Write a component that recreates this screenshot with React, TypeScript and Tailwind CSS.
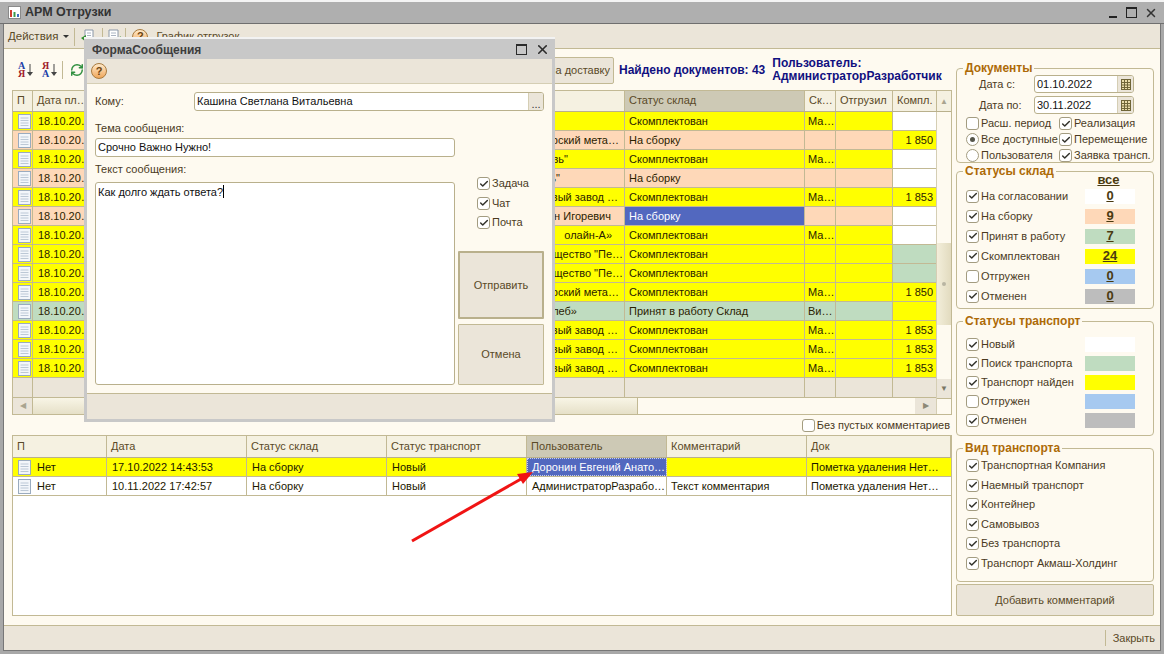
import { Check, RefreshCw, X } from "lucide-react";

const FONT = "[font-family:'Liberation_Sans',Arial,sans-serif]";

type Row = {
  bg: string;
  client: string;
  pad: string;
  status: string;
  sklad?: string;
  kompl?: string;
  komplBg?: string;
  selected?: boolean;
};

const YELLOW = "bg-[#ffff00]";
const PEACH = "bg-[#fed8b8]";
const GREEN = "bg-[#bfdcc0]";
const WHITE = "bg-white";

// клиент выровнен вправо: левая часть всё равно под диалогом
const rows: Row[] = [
  { bg: YELLOW, client: "", pad: "pr-2", status: "Скомплектован", sklad: "Ма…" },
  { bg: PEACH, client: "Северский мета…", pad: "pr-[5px]", status: "На сборку", kompl: "1 850", komplBg: YELLOW },
  { bg: YELLOW, client: "ООО \"Новь\"", pad: "pr-[56px]", status: "Скомплектован", sklad: "Ма…" },
  { bg: PEACH, client: "ООО \"Новь\"", pad: "pr-[64px]", status: "На сборку" },
  { bg: YELLOW, client: "Первый завод …", pad: "pr-[6px]", status: "Скомплектован", sklad: "Ма…", kompl: "1 853", komplBg: YELLOW },
  { bg: PEACH, client: "Иванов Иван Игоревич", pad: "pr-[13px]", status: "На сборку", selected: true },
  { bg: YELLOW, client: "олайн-А»", pad: "pr-[12px]", status: "Скомплектован", sklad: "Ма…" },
  { bg: YELLOW, client: "Общество \"Пе…", pad: "pr-[1px]", status: "Скомплектован", komplBg: GREEN },
  { bg: YELLOW, client: "Общество \"Пе…", pad: "pr-[1px]", status: "Скомплектован", komplBg: GREEN },
  { bg: YELLOW, client: "Северский мета…", pad: "pr-[5px]", status: "Скомплектован", sklad: "Ма…", kompl: "1 850", komplBg: YELLOW },
  { bg: GREEN, client: "«Хлеб»", pad: "pr-[47px]", status: "Принят в работу Склад", sklad: "Ви…", komplBg: YELLOW },
  { bg: YELLOW, client: "Первый завод …", pad: "pr-[6px]", status: "Скомплектован", sklad: "Ма…", kompl: "1 853", komplBg: YELLOW },
  { bg: YELLOW, client: "Первый завод …", pad: "pr-[6px]", status: "Скомплектован", sklad: "Ма…", kompl: "1 853", komplBg: YELLOW },
  { bg: YELLOW, client: "Первый завод …", pad: "pr-[6px]", status: "Скомплектован", sklad: "Ма…", kompl: "1 853", komplBg: YELLOW },
];

function DocIcon() {
  return (
    <svg width="13" height="15" viewBox="0 0 13 15" className="shrink-0">
      <rect x="0.5" y="0.5" width="12" height="14" fill="#f3f6fa" stroke="#9aabbf" />
      <path d="M2.5 4h8M2.5 6.5h8M2.5 9h8M2.5 11.5h8" stroke="#bcc8d6" strokeWidth="1" />
    </svg>
  );
}

function HelpIcon() {
  return (
    <span className="w-[16px] h-[16px] shrink-0 rounded-full border border-[#a87b3f] bg-gradient-to-b from-[#ffe9c8] to-[#eea659] text-[11px] font-bold text-[#6a4310] flex items-center justify-center">
      ?
    </span>
  );
}

function CheckBox({ checked = true }: { checked?: boolean }) {
  return (
    <span className="w-[13px] h-[13px] shrink-0 rounded-[3px] border border-[#a39c80] bg-white flex items-center justify-center">
      {checked && <Check size={10} strokeWidth={3.5} className="text-[#33332c]" />}
    </span>
  );
}

function Radio({ checked = false }: { checked?: boolean }) {
  return (
    <span className="w-[13px] h-[13px] shrink-0 rounded-full border border-[#a39c80] bg-white flex items-center justify-center">
      {checked && <span className="w-[5px] h-[5px] rounded-full bg-[#55554a]" />}
    </span>
  );
}

function CheckLabel({ label, checked = true, className = "" }: { label: string; checked?: boolean; className?: string }) {
  return (
    <div className={`flex items-center gap-[2px] leading-[13px] text-[#4b3a1e] ${className}`}>
      <CheckBox checked={checked} />
      <span className="whitespace-nowrap">{label}</span>
    </div>
  );
}

function RadioLabel({ label, checked = false }: { label: string; checked?: boolean }) {
  return (
    <div className="flex items-center gap-[2px] leading-[13px] text-[#4b3a1e]">
      <Radio checked={checked} />
      <span className="whitespace-nowrap">{label}</span>
    </div>
  );
}

function Group({ title, className, children }: { title: string; className: string; children: React.ReactNode }) {
  return (
    <div className={`relative shrink-0 rounded-[4px] border border-[#c2b994] ${className}`}>
      <span className="absolute left-[6px] -top-[8px] bg-[#fefaf0] px-[2px] text-[12px] leading-[14px] font-bold text-[#ad6a07] whitespace-nowrap">
        {title}
      </span>
      {children}
    </div>
  );
}

function DateField({ label, value }: { label: string; value: string }) {
  return (
    <div className="flex items-center h-[18px]">
      <span className="w-[68px] pl-[13px] text-[#4b3a1e]">{label}</span>
      <div className="w-[100px] h-[18px] rounded-[3px] border border-[#b9b08c] bg-white flex items-center overflow-hidden">
        <span className="flex-1 pl-[2px] text-[#111]">{value}</span>
        <span className="w-[16px] h-full bg-[#ebe5d9] border-l border-[#d5ceb4] flex items-center justify-center">
          <svg width="10" height="11" viewBox="0 0 10 11">
            <rect x="0.5" y="0.5" width="9" height="10" fill="#e9dcaa" stroke="#6f6537" />
            <path d="M0 3.5h10M0 6h10M0 8.5h10M3.5 0v11M6.5 0v11" stroke="#6f6537" strokeWidth="1" />
          </svg>
        </span>
      </div>
    </div>
  );
}

function StatusRow({ label, checked = true, value, swatch, h }: { label: string; checked?: boolean; value?: string; swatch: string; h: string }) {
  return (
    <div className={`flex items-center ${h}`}>
      <CheckLabel label={label} checked={checked} className="w-[119px]" />
      <div className={`w-[50px] h-[15px] flex items-center justify-center font-bold underline text-[13px] text-[#4a3a10] ${swatch}`}>
        {value}
      </div>
    </div>
  );
}

function MainTable() {
  return (
    <div className="h-[325px] shrink-0 border border-[#c2b994] bg-[#ebe5d9] flex flex-col overflow-hidden">
      <div className="flex h-[21px] bg-[#f5f1e1] border-b border-[#b9b08c] text-[#5a4a28] shrink-0 leading-[19px]">
        <div className="w-[20px] shrink-0 border-r border-[#c2b994] pl-[4px]">П</div>
        <div className="w-[97px] shrink-0 border-r border-[#c2b994] pl-[4px] whitespace-nowrap">Дата пл…</div>
        <div className="w-[495px] shrink-0 border-r border-[#c2b994] pl-[4px]">Контрагент</div>
        <div className="w-[180px] shrink-0 border-r border-[#c2b994] bg-[#cdc9b5] pl-[4px]">Статус склад</div>
        <div className="w-[31px] shrink-0 border-r border-[#c2b994] pl-[4px]">Ск…</div>
        <div className="w-[57px] shrink-0 border-r border-[#c2b994] pl-[4px]">Отгрузил</div>
        <div className="w-[44px] shrink-0 border-r border-[#c2b994] pl-[4px] whitespace-nowrap">Компл.</div>
        <div className="flex-1 flex items-center justify-center text-[#a9a48f] text-[8px]">▲</div>
      </div>
      <div className="flex flex-1 min-h-0">
        <div className="w-[923px] shrink-0 flex flex-col">
          {rows.map((r, i) => (
            <div key={i} className={`flex h-[19px] shrink-0 border-b border-[#c2b994] leading-[18px] text-[#2b2200] ${r.bg}`}>
              <div className="w-[20px] shrink-0 border-r border-[#c2b994] flex items-center justify-end pr-[1px]">
                <DocIcon />
              </div>
              <div className="w-[97px] shrink-0 border-r border-[#c2b994] pl-[5px] whitespace-nowrap overflow-hidden">18.10.20…</div>
              <div className={`w-[495px] shrink-0 border-r border-[#c2b994] text-right whitespace-nowrap overflow-hidden ${r.pad}`}>{r.client}</div>
              <div className={`w-[180px] shrink-0 border-r border-[#c2b994] pl-[4px] whitespace-nowrap ${r.selected ? "bg-[#5268bf] text-white" : ""}`}>{r.status}</div>
              <div className="w-[31px] shrink-0 border-r border-[#c2b994] pl-[3px] whitespace-nowrap">{r.sklad}</div>
              <div className="w-[57px] shrink-0 border-r border-[#c2b994]" />
              <div className={`w-[43px] shrink-0 text-right pr-[3px] ${r.komplBg ?? WHITE}`}>{r.kompl}</div>
            </div>
          ))}
          <div className="flex h-[20px] shrink-0 border-b border-[#c2b994]">
            <div className="w-[20px] border-r border-[#c2b994]" />
            <div className="w-[97px] border-r border-[#c2b994]" />
            <div className="w-[495px] border-r border-[#c2b994]" />
            <div className="w-[180px] border-r border-[#c2b994]" />
            <div className="w-[31px] border-r border-[#c2b994]" />
            <div className="w-[57px] border-r border-[#c2b994]" />
          </div>
          <div className="flex flex-1">
            <div className="w-[20px] flex items-center justify-center text-[#a9a48f] text-[8px] border-r border-[#c2b994]">◀</div>
            <div className="w-[605px] bg-gradient-to-b from-[#f8f5e6] to-[#e6e0c8] border-r border-[#c2b994]" />
            <div className="flex-1 bg-[#fefaf0]" />
            <div className="w-[21px] flex items-center justify-center text-[#8d8875] text-[8px] bg-[#ebe5d9]">▶</div>
          </div>
        </div>
        <div className="flex-1 flex flex-col border-l border-[#d5ceb4] bg-[#fefaf0]">
          <div className="h-[131px] shrink-0" />
          <div className="h-[82px] shrink-0 bg-gradient-to-r from-[#f3eeda] to-[#e2dbbf] flex items-center justify-center">
            <span className="w-[4px] h-[4px] rounded-full bg-[#b9b5a2]" />
          </div>
          <div className="flex-1" />
          <div className="h-[20px] shrink-0 bg-[#ebe5d9] border-b border-[#c2b994] flex items-center justify-center text-[#7a7665] text-[8px]">▼</div>
          <div className="h-[15px] shrink-0" />
        </div>
      </div>
    </div>
  );
}

const commentCols = ["w-[94px]", "w-[140px]", "w-[140px]", "w-[140px]", "w-[140px]", "w-[140px]", "flex-1"];
const commentHeads = ["П", "Дата", "Статус склад", "Статус транспорт", "Пользователь", "Комментарий", "Док"];

function CommentsTable() {
  const data = [
    { bg: YELLOW, date: "17.10.2022 14:43:53", user: "Доронин Евгений Анато…", note: "", sel: true },
    { bg: WHITE, date: "10.11.2022 17:42:57", user: "АдминистраторРазрабо…", note: "Текст комментария", sel: false },
  ];
  return (
    <div className="flex-1 border border-[#c2b994] bg-white overflow-hidden">
      <div className="flex h-[22px] bg-[#f5f1e1] border-b border-[#b9b08c] text-[#5a4a28] leading-[21px]">
        {commentHeads.map((h, i) => (
          <div key={h} className={`${commentCols[i]} border-r border-[#c2b994] pl-[4px] ${i === 4 ? "bg-[#cdc9b5]" : ""}`}>{h}</div>
        ))}
      </div>
      {data.map((d) => (
        <div key={d.date} className={`flex h-[19px] border-b border-[#c2b994] leading-[18px] text-[#1c1800] ${d.bg}`}>
          <div className={`${commentCols[0]} border-r border-[#c2b994] pl-[5px] flex items-center gap-[6px]`}>
            <DocIcon />
            <span>Нет</span>
          </div>
          <div className={`${commentCols[1]} border-r border-[#c2b994] pl-[5px]`}>{d.date}</div>
          <div className={`${commentCols[2]} border-r border-[#c2b994] pl-[5px]`}>На сборку</div>
          <div className={`${commentCols[3]} border-r border-[#c2b994] pl-[5px]`}>Новый</div>
          <div className={`${commentCols[4]} border-r border-[#c2b994] pl-[5px] whitespace-nowrap ${d.sel ? "bg-[#5268bf] text-white outline-1 -outline-offset-1 outline-dotted outline-[#c9cfe8]" : ""}`}>{d.user}</div>
          <div className={`${commentCols[5]} border-r border-[#c2b994] pl-[4px] whitespace-nowrap`}>{d.note}</div>
          <div className={`${commentCols[6]} pl-[4px] whitespace-nowrap`}>Пометка удаления Нет…</div>
        </div>
      ))}
    </div>
  );
}

function SidePanel() {
  return (
    <div className="w-[198px] shrink-0 flex flex-col">
      <Group title="Документы" className="h-[95px] mt-[19px] pt-[6px] pl-[9px]">
        <div className="flex flex-col gap-[3px]">
          <DateField label="Дата с:" value="01.10.2022" />
          <DateField label="Дата по:" value="30.11.2022" />
        </div>
        <div className="grid grid-cols-[93px_1fr] gap-y-[3px] mt-[3px]">
          <CheckLabel label="Расш. период" checked={false} />
          <CheckLabel label="Реализация" />
          <RadioLabel label="Все доступные" checked />
          <CheckLabel label="Перемещение" />
          <RadioLabel label="Пользователя" />
          <CheckLabel label="Заявка трансп." />
        </div>
      </Group>
      <Group title="Статусы склад" className="h-[138px] mt-[8px] pl-[9px]">
        <div className="h-[14px] pl-[119px] pr-[3px] w-[169px] text-center font-bold underline text-[13px] leading-[16px] text-[#4a3a10]">все</div>
        <StatusRow h="h-[20px]" label="На согласовании" value="0" swatch="bg-white" />
        <StatusRow h="h-[20px]" label="На сборку" value="9" swatch={PEACH} />
        <StatusRow h="h-[20px]" label="Принят в работу" value="7" swatch={GREEN} />
        <StatusRow h="h-[20px]" label="Скомплектован" value="24" swatch={YELLOW} />
        <StatusRow h="h-[20px]" label="Отгружен" checked={false} value="0" swatch="bg-[#a6c9f0]" />
        <StatusRow h="h-[20px]" label="Отменен" value="0" swatch="bg-[#bdbdbd]" />
      </Group>
      <Group title="Статусы транспорт" className="h-[115px] mt-[12px] pl-[9px] pt-[13px]">
        <StatusRow h="h-[19px]" label="Новый" swatch="bg-white" />
        <StatusRow h="h-[19px]" label="Поиск транспорта" swatch={GREEN} />
        <StatusRow h="h-[19px]" label="Транспорт найден" swatch={YELLOW} />
        <StatusRow h="h-[19px]" label="Отгружен" checked={false} swatch="bg-[#a6c9f0]" />
        <StatusRow h="h-[19px]" label="Отменен" swatch="bg-[#bdbdbd]" />
      </Group>
      <Group title="Вид транспорта" className="h-[134px] mt-[12px] pl-[9px] pt-[10px]">
        <div className="flex flex-col gap-[6.5px]">
          <CheckLabel label="Транспортная Компания" />
          <CheckLabel label="Наемный транспорт" />
          <CheckLabel label="Контейнер" />
          <CheckLabel label="Самовывоз" />
          <CheckLabel label="Без транспорта" />
          <CheckLabel label="Транспорт Акмаш-Холдинг" />
        </div>
      </Group>
      <button className="flex-1 mt-[2px] border border-[#c2b994] rounded-[2px] bg-[#ebe5d9] text-[#5a4a28]">Добавить комментарий</button>
    </div>
  );
}

function MessageDialog() {
  return (
    <div className="absolute left-[84px] top-[37px] w-[471px] h-[385px] bg-[#c8c8c8] border-t-2 border-[#f2f2f2] flex flex-col px-[3px] pb-[3px]">
      <div className="h-[20px] shrink-0 flex items-center justify-between pl-[5px] pr-[2px] pt-[1px]">
        <span className="text-[12px] font-bold text-[#3d3d3d]">ФормаСообщения</span>
        <div className="flex items-center gap-[8px]">
          <span className="w-[11px] h-[11px] border-[1.5px] border-t-[2.5px] border-[#2b2b2b]" />
          <X size={15} strokeWidth={2.5} className="text-[#2b2b2b]" />
        </div>
      </div>
      <div className="h-[25px] shrink-0 bg-[#ebe5d9] border-b border-[#d5ceb4] flex items-center pl-[4px]">
        <HelpIcon />
      </div>
      <div className="flex-1 bg-[#fefaf0] px-[8px] flex flex-col min-h-0 text-[#4b3a1e]">
        <div className="flex items-center h-[19px] mt-[8px] leading-[17px]">
          <span className="w-[99px]">Кому:</span>
          <div className="flex-1 h-[19px] rounded-[3px] border border-[#b9b08c] bg-white flex items-center overflow-hidden">
            <span className="flex-1 pl-[2px] text-[#111]">Кашина Светлана Витальевна</span>
            <span className="w-[15px] h-full bg-[#ebe5d9] border-l border-[#d5ceb4] flex items-end justify-center leading-[12px] text-[#333]">...</span>
          </div>
        </div>
        <div className="mt-[10px] h-[14px] leading-[14px]">Тема сообщения:</div>
        <div className="mt-[3px] w-[360px] h-[19px] shrink-0 rounded-[3px] border border-[#b9b08c] bg-white pl-[2px] leading-[17px] text-[#111]">Срочно Важно Нужно!</div>
        <div className="mt-[5px] h-[14px] leading-[14px]">Текст сообщения:</div>
        <div className="flex mt-[6px] flex-1 min-h-0 gap-[3px] pb-[8px]">
          <div className="w-[360px] rounded-[3px] border border-[#b9b08c] bg-white pl-[2px] pt-[2px] leading-[15px] text-[#111]">
            Как долго ждать ответа?<span className="inline-block w-px h-[13px] bg-black align-[-2px]" />
          </div>
          <div className="flex-1 flex flex-col min-h-0">
            <div className="flex flex-col gap-[6.5px] pl-[19px] -mt-[5px] h-[74px] shrink-0">
              <CheckLabel label="Задача" />
              <CheckLabel label="Чат" />
              <CheckLabel label="Почта" />
            </div>
            <button className="h-[68px] shrink-0 border-2 border-[#b9b08c] bg-[#ebe5d9] text-[#5a4a28] rounded-[1px]">Отправить</button>
            <button className="flex-1 mt-[5px] border border-[#c2b994] bg-[#ebe5d9] text-[#5a4a28] rounded-[1px]">Отмена</button>
          </div>
        </div>
      </div>
      <div className="h-[26px] shrink-0 bg-[#ebe5d9] border-t border-[#c2b994]" />
    </div>
  );
}

function SortIcon({ top, bottom, topColor, bottomColor, className }: { top: string; bottom: string; topColor: string; bottomColor: string; className: string }) {
  return (
    <span className={`flex items-center ${className}`}>
      <span className="flex flex-col w-[9px] font-serif font-bold text-[10px] leading-[8px] items-center">
        <span className={topColor}>{top}</span>
        <span className={bottomColor}>{bottom}</span>
      </span>
      <svg width="6" height="14" viewBox="0 0 6 14" className="ml-[1px]">
        <path d="M3 1v9" stroke="#444" strokeWidth="1" />
        <path d="M0 9h6l-3 4z" fill="#444" />
      </svg>
    </span>
  );
}

export default function App() {
  return (
    <div className={`${FONT} w-[1164px] h-[654px] relative overflow-hidden bg-[#f4f4f4] pt-[2px] flex flex-col text-[11px] text-[#333]`}>
      {/* title */}
      <div className="h-[22px] shrink-0 bg-[#afafaf] border-b border-[#6f6f6f] flex items-center justify-between pl-[8px] pr-[6px]">
        <div className="flex items-center gap-[4px]">
          <svg width="13" height="13" viewBox="0 0 13 13">
            <rect x="0.5" y="0.5" width="12" height="12" fill="#fff" stroke="#8a8a8a" />
            <path d="M3 4v7" stroke="#d13b2e" strokeWidth="2" />
            <path d="M6.5 6v5" stroke="#3d9a4b" strokeWidth="2" />
            <path d="M10 8v3" stroke="#3b6fc2" strokeWidth="2" />
          </svg>
          <span className="text-[12.5px] font-bold text-[#333]">АРМ Отгрузки</span>
        </div>
        <div className="flex items-center">
          <span className="w-[8px] h-[2px] bg-[#222] mt-[9px]" />
          <span className="ml-[9px] w-[11px] h-[11px] border-[1.5px] border-t-[2.5px] border-[#222]" />
          <X size={14} strokeWidth={2.5} className="ml-[7px] text-[#333]" />
        </div>
      </div>
      <div className="flex-1 min-h-0 border-x-[3px] border-b-[3px] border-[#a8a8a8] flex flex-col">
        <div className="flex-1 min-h-0 border-x border-b border-[#777] bg-[#fefaf0] flex flex-col">
          {/* actions bar */}
          <div className="h-[25px] shrink-0 bg-[#ebe5d9] border-b border-[#c2b994] flex items-center pl-[4px] pt-[1px]">
            <span className="text-[11.5px] text-[#5a4a28]">Действия</span>
            <span className="ml-[5px] w-0 h-0 border-x-[3px] border-t-[3px] border-x-transparent border-t-[#333]" />
            <span className="ml-[5px] w-px h-[18px] bg-[#c2b994]" />
            <svg width="16" height="16" viewBox="0 0 16 16" className="ml-[5px]">
              <path d="M5 1h8v13H5z" fill="#fff" stroke="#8a97a8" />
              <path d="M7 4h4M7 6.5h4M7 9h4" stroke="#aab4c2" />
              <path d="M1 9l5-3v7z" fill="#2f8f2f" />
            </svg>
            <span className="ml-[6px] w-px h-[18px] bg-[#c2b994]" />
            <svg width="16" height="16" viewBox="0 0 16 16" className="ml-[4px]">
              <path d="M2 1h9v13H2z" fill="#fff" stroke="#8a97a8" />
              <path d="M4 4h5M4 6.5h5M4 9h5" stroke="#aab4c2" />
              <path d="M7 11l2.5 2.5L14 8" fill="none" stroke="#2f8f2f" strokeWidth="2" />
            </svg>
            <span className="ml-[2px] w-px h-[18px] bg-[#c2b994]" />
            <span className="ml-[6px]"><HelpIcon /></span>
            <span className="ml-[8px] text-[#5a4a28] whitespace-nowrap">График отгрузок</span>
          </div>
          {/* body */}
          <div className="flex-1 min-h-0 flex pl-[8px] pr-[5px] pb-[9px] gap-[4px]">
            <div className="w-[940px] shrink-0 flex flex-col">
              <div className="h-[41px] shrink-0 flex items-center pt-[1px]">
                <SortIcon top="А" bottom="Я" topColor="text-[#1d3fa8]" bottomColor="text-[#a01c2a]" className="ml-[5px]" />
                <SortIcon top="Я" bottom="А" topColor="text-[#a01c2a]" bottomColor="text-[#1d3fa8]" className="ml-[8px]" />
                <span className="ml-[5px] w-px h-[18px] bg-[#c2b994]" />
                <RefreshCw size={14} strokeWidth={2.5} className="ml-[7px] text-[#2f8f3f]" />
                <div className="ml-auto flex items-center w-[413px]">
                  <button className="w-[75px] h-[27px] shrink-0 border border-[#c2b994] rounded-[2px] bg-[#ebe5d9] text-[#5a4a28] text-right pr-[3px] whitespace-nowrap">На доставку</button>
                  <span className="ml-[5px] font-bold text-[#101080] whitespace-nowrap text-[12px]">Найдено документов: 43</span>
                  <span className="ml-[7px] font-bold text-[#101080] leading-[13px] text-[12px]">Пользователь:<br />АдминистраторРазработчик</span>
                </div>
              </div>
              <MainTable />
              <div className="h-[20px] shrink-0 flex items-center justify-end pr-[2px] pt-[1px]">
                <CheckLabel label="Без пустых комментариев" checked={false} />
              </div>
              <CommentsTable />
            </div>
            <SidePanel />
          </div>
          {/* status */}
          <div className="h-[25px] shrink-0 bg-[#ebe5d9] border-t border-[#c2b994] flex items-center justify-end pr-[5px] text-[#5a4a28]">
            <span className="w-px h-[16px] bg-[#c2b994] mr-[7px]" />
            Закрыть
          </div>
        </div>
      </div>
      <MessageDialog />
      {/* стрелка поверх таблицы */}
      <svg className="absolute left-0 top-0 pointer-events-none" width="1164" height="654" viewBox="0 0 1164 654">
        <path d="M412 541L521 479" stroke="#f01414" strokeWidth="3" />
        <path d="M533 472L517 474L523 484Z" fill="#f01414" />
      </svg>
    </div>
  );
}
